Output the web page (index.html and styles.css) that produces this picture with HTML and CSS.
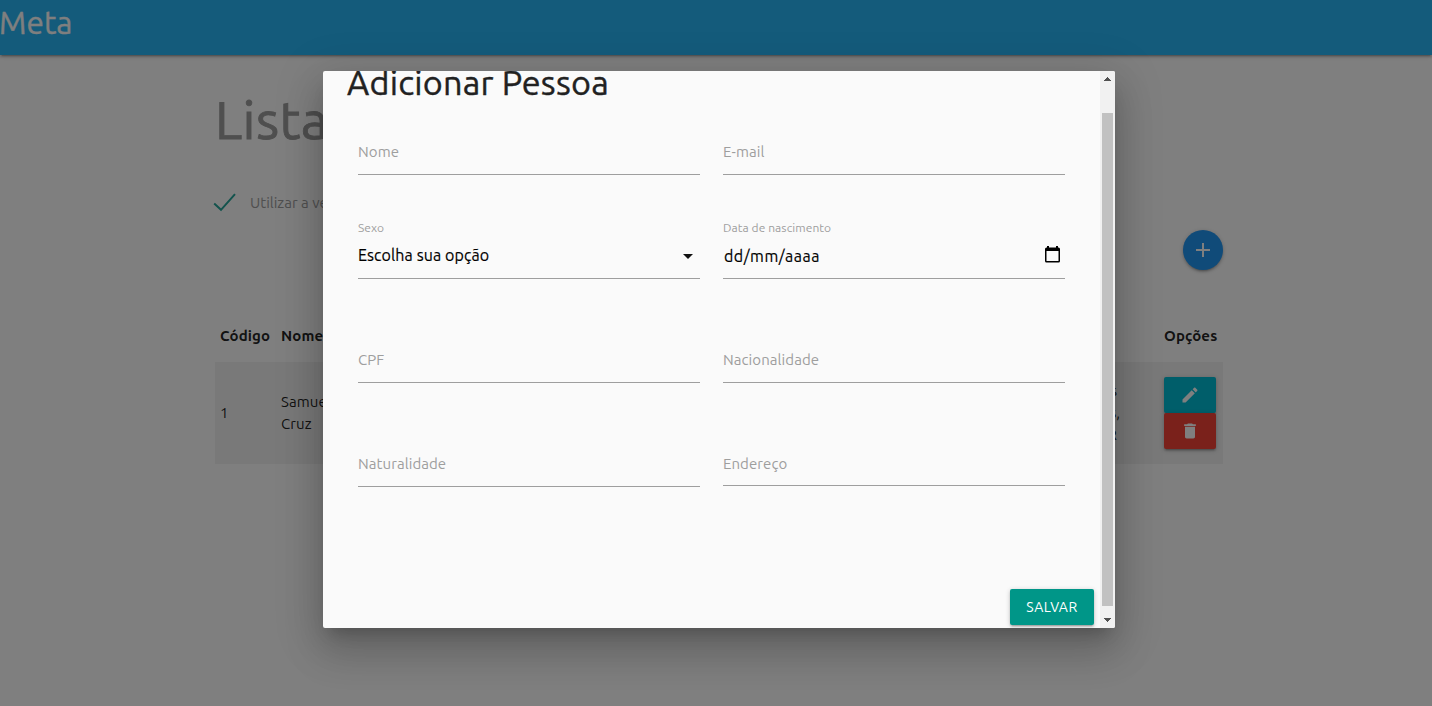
FILE: index.html
```html
<!DOCTYPE html>
<html lang="pt-br">
<head>
<meta charset="utf-8">
<title>Meta</title>
<link rel="stylesheet" href="styles.css">
</head>
<body>
<nav class="navbar"><span class="brand">Meta</span></nav>
<main class="container">
  <h2 class="page-title">Lista</h2>
  <label class="check">
    <svg class="tick" width="24" height="20" viewBox="0 0 24 20"><path d="M1.2 10.5 8 16.8 22 1.2" fill="none" stroke="#26a69a" stroke-width="2"/></svg>
    <span class="check-text">Utilizar a versão</span>
  </label>
  <div class="add-row">
    <button class="fab"><svg width="24" height="24" viewBox="0 0 24 24"><path d="M19 13h-6v6h-2v-6H5v-2h6V5h2v6h6v2z" fill="#fff"/></svg></button>
  </div>
  <div class="table-row table-head">
    <span class="th codigo">Código</span><span class="th nome">Nome</span><span></span><span class="th opcoes">Opções</span>
  </div>
  <div class="table-row table-body">
    <span>1</span>
    <span class="person">Samuel<br>Cruz</span>
    <span class="address"><span class="line">s</span><span class="line end">s,</span><span class="line">R</span></span>
    <span class="actions">
      <button class="btn edit"><svg width="20" height="20" viewBox="0 0 24 24"><path d="M3 17.25V21h3.75L17.81 9.94l-3.75-3.75L3 17.25zM20.71 7.04c.39-.39.39-1.02 0-1.41l-2.34-2.34c-.39-.39-1.02-.39-1.41 0l-1.83 1.83 3.75 3.75 1.83-1.83z" fill="#fff"/></svg></button>
      <button class="btn delete"><svg width="20" height="20" viewBox="0 0 24 24"><path d="M6 19c0 1.1.9 2 2 2h8c1.1 0 2-.9 2-2V7H6v12zM19 4h-3.5l-1-1h-5l-1 1H5v2h14V4z" fill="#fff"/></svg></button>
    </span>
  </div>
</main>
<div class="overlay">
  <section class="modal">
    <div class="modal-content">
      <h4 class="modal-title">Adicionar Pessoa</h4>
      <form class="fields">
        <div class="field"><span class="label">Nome</span></div>
        <div class="field"><span class="label">E-mail</span></div>
        <div class="field filled"><span class="small">Sexo</span>
          <div class="value"><span class="option">Escolha sua opção</span><svg class="caret" width="10" height="5" viewBox="0 0 10 5"><path d="M0 0h10L5 5z" fill="#111"/></svg></div></div>
        <div class="field filled"><span class="small">Data de nascimento</span>
          <div class="value date"><span class="date-text">dd/mm/aaaa</span><svg class="calendar" width="15" height="17" viewBox="0 0 15 17"><path d="M1.5 1.5h12A1.5 1.5 0 0 1 15 3v12a1.500 1.500 0 0 1-1.500 1.500h-12A1.500 1.500 0 0 1 0 15V3a1.500 1.500 0 0 1 1.500-1.500zM1.500 5v10h12V5zM2 0h2v1.500H2zM11 0h2v1.500h-2z" fill="#000" fill-rule="evenodd"/></svg></div></div>
        <div class="field"><span class="label">CPF</span></div>
        <div class="field"><span class="label">Nacionalidade</span></div>
        <div class="field"><span class="label">Naturalidade</span></div>
        <div class="field short"><span class="label">Endereço</span></div>
      </form>
      <div class="footer"><button class="save">SALVAR</button></div>
    </div>
    <div class="scrollbar">
      <svg width="7" height="4" viewBox="0 0 7 4"><path d="M3 0h1v1h1v1h1v1h1v1H0V3h1V2h1V1h1z" fill="#505050"/></svg>
      <div class="thumb"></div>
      <svg width="7" height="4" viewBox="0 0 7 4"><path d="M0 0h7v1H6v1H5v1H4v1H3V3H2V2H1V1H0z" fill="#505050"/></svg>
    </div>
  </section>
</div>
</body>
</html>
```
FILE: styles.css
```css
* { box-sizing: border-box; }
body { margin: 0; height: 706px; overflow: hidden; background: #fff; color: rgba(0,0,0,.87); font: 15px/22px Ubuntu, "Noto Sans", sans-serif; letter-spacing: .07px; }
h2, h4 { margin: 0; font-weight: 400; white-space: nowrap; }
button { border: 0; padding: 0; display: flex; align-items: center; justify-content: center; font-family: inherit; }
svg { display: block; flex: none; }
.navbar { height: 55px; background: #29b6f6; color: #fff; box-shadow: 0 2px 2px rgba(0,0,0,.14), 0 3px 1px -2px rgba(0,0,0,.12), 0 1px 5px rgba(0,0,0,.2); }
.brand { display: block; font-size: 31.5px; line-height: 46px; -webkit-text-stroke: .35px; margin-left: -1px; }
.container { width: 1008px; margin-left: 215px; }
.page-title { height: 138px; padding-top: 35px; font-size: 53.4px; line-height: 58px; letter-spacing: .4px; color: #9e9e9e; -webkit-text-stroke: .9px #9e9e9e; }
.check { height: 20px; display: flex; align-items: center; gap: 13px; color: #9e9e9e; margin-left: -2px; letter-spacing: 0; }
.add-row { height: 97px; padding-top: 17px; display: flex; justify-content: flex-end; }
.fab { width: 40px; height: 40px; border-radius: 50%; background: #2196f3; box-shadow: 0 2px 2px rgba(0,0,0,.14), 0 3px 1px -2px rgba(0,0,0,.12), 0 1px 5px rgba(0,0,0,.2); }
.table-row { display: grid; grid-template-columns: 61px 60px 784px 59px; padding-left: 5px; align-items: center; }
.table-row > :last-child { margin-left: 39px; }
.table-head { height: 52px; font-weight: 700; letter-spacing: .12px; }
.table-body { height: 102px; background: #f2f2f2; }
.address { display: flex; flex-direction: column; align-items: flex-end; padding-right: 5px; }
.line { margin-right: 3px; }
.end { margin-right: 0; }
.actions { padding-bottom: 1px; }
.btn { width: 52px; height: 36px; border-radius: 2px; box-shadow: 0 2px 2px rgba(0,0,0,.14), 0 3px 1px -2px rgba(0,0,0,.12), 0 1px 5px rgba(0,0,0,.2); }
.edit { background: #00bcd4; }
.delete { background: #f44336; }
.overlay { position: absolute; inset: 0; background: rgba(0,0,0,.5); }
.modal { width: 792px; height: 557px; margin: 71px 0 0 323px; display: flex; overflow: hidden; border-radius: 2px; background: #fafafa; box-shadow: 0 24px 38px 3px rgba(0,0,0,.14), 0 9px 46px 8px rgba(0,0,0,.12), 0 11px 15px -7px rgba(0,0,0,.2); }
.modal-content { width: 777px; }
.modal-title { height: 0; padding-left: 24px; font-size: 34.2px; line-height: 22px; letter-spacing: .22px; color: #212121; -webkit-text-stroke: .4px #212121; }
.fields { display: grid; grid-template-columns: 342px 342px; grid-auto-rows: 104px; column-gap: 23px; padding-left: 35px; }
.field { height: 104px; border-bottom: 1px solid #9e9e9e; padding-top: 70px; color: #9e9e9e; white-space: nowrap; }
.short { height: 103px; }
.filled { padding-top: 43px; }
.small { display: block; font-size: 12px; line-height: 20px; }
.value { display: flex; align-items: center; justify-content: space-between; height: 34px; padding-right: 7px; font-size: 16px; letter-spacing: .1px; color: #000; -webkit-text-stroke: .15px; }
.date { padding: 2px 5px 0 1px; letter-spacing: .5px; }
.caret { margin-top: 2px; }
.calendar { margin-top: -3px; }
.footer { padding: 102px 6px 0 0; display: flex; justify-content: flex-end; }
.save { width: 84px; height: 36px; border-radius: 2px; background: #009688; color: #fff; font-size: 14px; letter-spacing: .5px; box-shadow: 0 2px 2px rgba(0,0,0,.14), 0 3px 1px -2px rgba(0,0,0,.12), 0 1px 5px rgba(0,0,0,.2); }
.scrollbar { width: 15px; padding: 6px 0; background: #f1f1f1; display: flex; flex-direction: column; align-items: center; justify-content: space-between; }
.thumb { width: 11px; height: 493px; margin-top: 20px; background: #c1c1c1; }
```
